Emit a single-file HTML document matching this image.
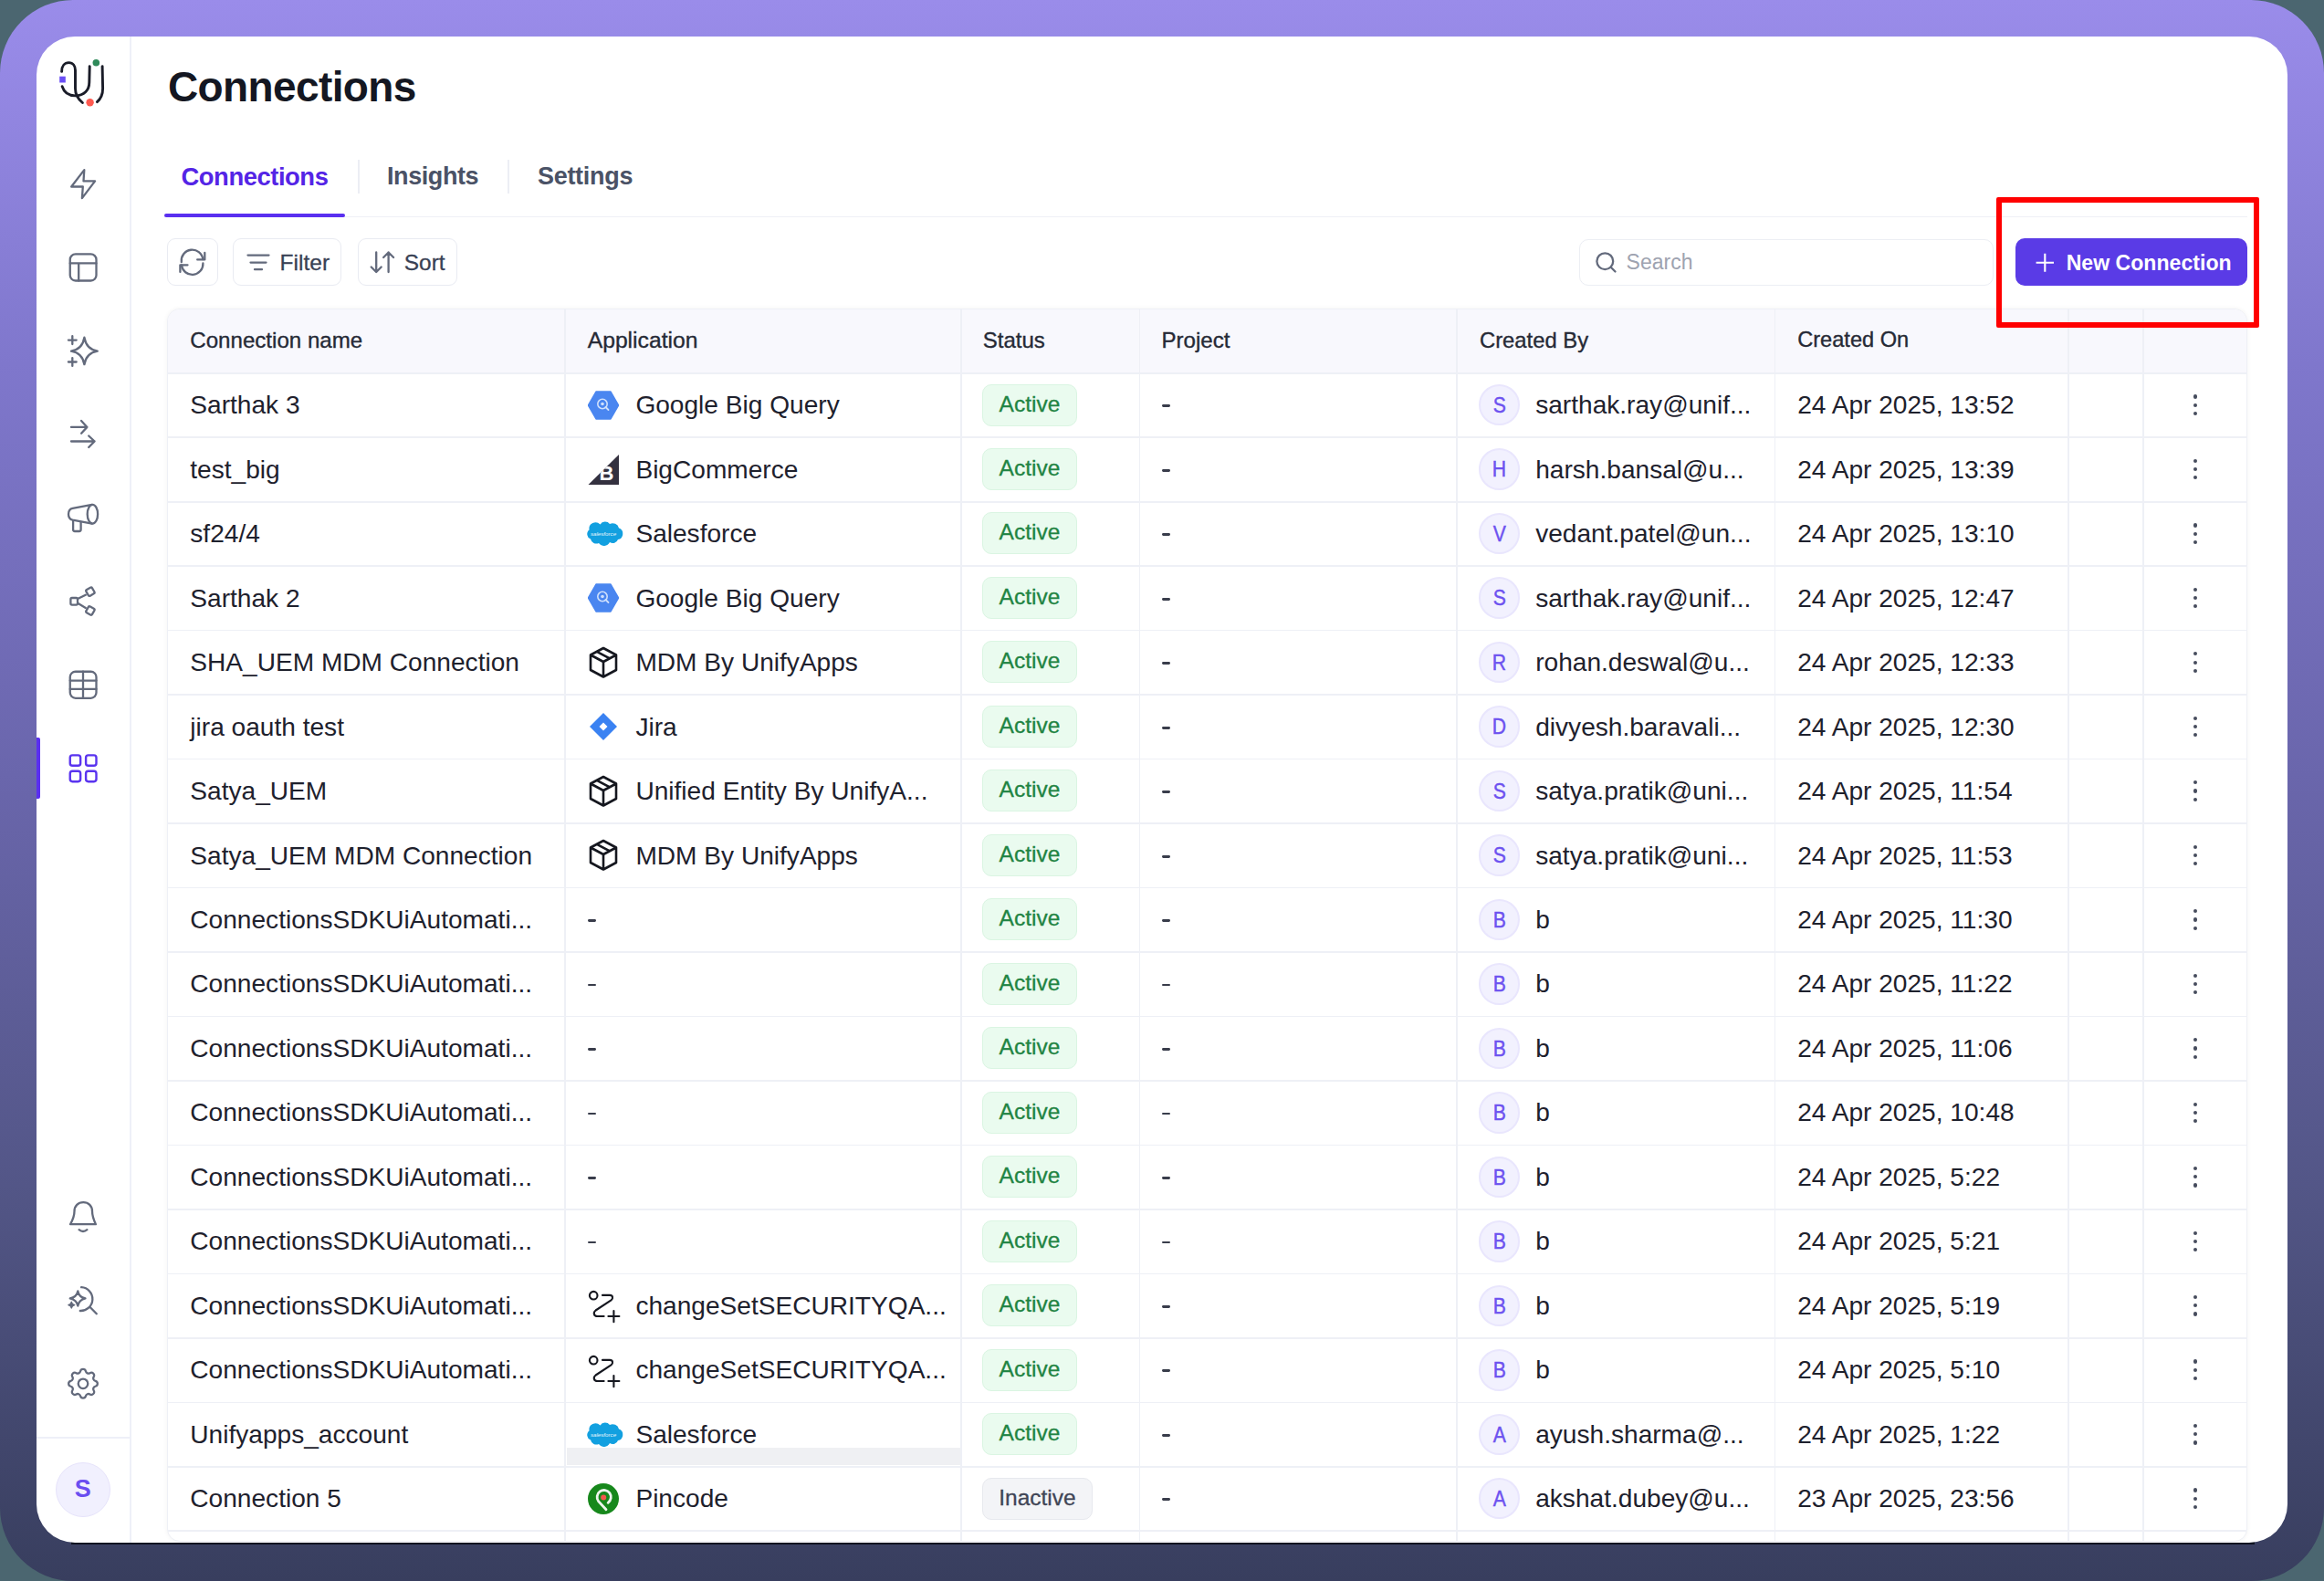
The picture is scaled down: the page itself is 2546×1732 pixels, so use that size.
<!DOCTYPE html><html><head><meta charset='utf-8'><style>
*{box-sizing:border-box;margin:0;padding:0}
html,body{width:2546px;height:1732px;overflow:hidden;background:#4b6670;font-family:"Liberation Sans",sans-serif}
.abs{position:absolute}
.frame{position:absolute;left:0;top:0;width:2546px;height:1732px;border-radius:80px;background:linear-gradient(180deg,#9a8cea 0%,#7f77cc 23%,#6a66ac 49%,#535687 75%,#383e5e 100%)}
.win{position:absolute;left:40px;top:40px;width:2466px;height:1650px;border-radius:42px;background:#ffffff;overflow:hidden}
.t{position:absolute;white-space:nowrap;line-height:1}
.btn{position:absolute;top:261px;height:52px;border:1.5px solid #e9ebf2;border-radius:9px;background:#fff}
.cell{position:absolute;white-space:nowrap;color:#1e212d;font-size:28.1px;line-height:1}
.hd{position:absolute;white-space:nowrap;color:#262a36;font-size:24px;line-height:1;-webkit-text-stroke:0.35px #262a36}
.badge{position:absolute;height:46px;border-radius:10px;font-size:24.5px;line-height:41px;text-align:center;-webkit-text-stroke:0.3px currentColor}
.av{position:absolute;width:45.5px;height:45.5px;border-radius:50%;background:#f2f1fe;border:2px solid #e9e6fd;color:#6d52f0;font-size:23.5px;-webkit-text-stroke:0.45px #6d52f0;line-height:42.5px;text-align:center}.av span{display:inline-block;transform:scaleX(0.9)}
.kb{position:absolute;width:4.2px;height:4.2px;border-radius:50%;background:#464c5d}
</style></head><body>
<div class="frame"></div>
<div class="abs" style="left:78px;top:1689px;width:2392px;height:3px;background:#111522"></div>
<div class="win"></div>
<div class="abs" style="left:142px;top:40px;width:1.5px;height:1650px;background:#eef0f8"></div>
<div class="abs" style="left:40px;top:1574px;width:102px;height:1.5px;background:#eef0f8"></div>
<svg class="abs" style="left:0;top:0" width="2546" height="1732" viewBox="0 0 2546 1732"><path d="M67.6 78.4 C67.6 72 71 68.6 75.4 68.6 C80 68.6 82.5 72.5 82.5 77 L82.5 97 C82.5 104 85.5 108.5 90.4 112.5" fill="none" stroke="#1a1c28" stroke-width="2.9" stroke-linecap="round"/><path d="M68.1 94.7 C70 101 75 104.9 82.5 104.9 C92 104.9 97.8 99 97.8 90 L98.2 72.6" fill="none" stroke="#1a1c28" stroke-width="2.9" stroke-linecap="round"/><path d="M112.1 72.6 L112.6 97 C112.6 103.5 110 108.5 106.4 111.6" fill="none" stroke="#1a1c28" stroke-width="2.9" stroke-linecap="round"/><circle cx="105.3" cy="68.8" r="3.8" fill="#2f8a5a"/><circle cx="98.6" cy="112.2" r="4.2" fill="#ff5a50"/><rect x="65.2" y="83.7" width="6.6" height="6.8" fill="#6a4ff5"/><path d="M92.3 186.1 L78.2 204.5 L90.8 204.5 L89.9 217.1 L104.1 198.4 L91.5 198.4 Z" fill="none" stroke="#636a7c" stroke-width="2.3" stroke-linecap="round" stroke-linejoin="round"/><rect x="76.75" y="278.4" width="28.75" height="29.1" rx="6" fill="none" stroke="#636a7c" stroke-width="2.3" stroke-linecap="round" stroke-linejoin="round"/><path d="M76.75 288.4 H105.5 M86.2 288.4 V307.5" fill="none" stroke="#636a7c" stroke-width="2.3" stroke-linecap="round" stroke-linejoin="round"/><path d="M92.4 369.75 Q94.5 382.5 106.8 384.6 Q94.5 386.7 92.4 399.2 Q90.3 386.7 78 384.6 Q90.3 382.5 92.4 369.75 Z" fill="none" stroke="#636a7c" stroke-width="2.3" stroke-linecap="round" stroke-linejoin="round"/><path d="M79.3 368.2 V377 M74.9 372.6 H83.7 M79.3 392.1 V400.9 M74.9 396.5 H83.7" fill="none" stroke="#636a7c" stroke-width="2.3" stroke-linecap="round" stroke-linejoin="round"/><path d="M78 467.9 H95.4 M89.1 460.9 L95.4 467.9 L89.1 474.7 M78 483.5 H103.6 M97.2 477.5 L103.6 483.5 L97.2 490" fill="none" stroke="#636a7c" stroke-width="2.3" stroke-linecap="round" stroke-linejoin="round"/><path d="M100.8 552.9 L79.6 556.9 C76.5 557.5 75 560 75 563.2 C75 566.5 76.5 569 79.6 569.7 L100.8 573.6" fill="none" stroke="#636a7c" stroke-width="2.3" stroke-linecap="round" stroke-linejoin="round"/><ellipse cx="101.4" cy="563.2" rx="5.7" ry="10.4" fill="none" stroke="#636a7c" stroke-width="2.3" stroke-linecap="round" stroke-linejoin="round"/><path d="M80.1 570.5 V580 Q80.1 582 82 582 H86.8 Q88.6 582 88.6 580 V572" fill="none" stroke="#636a7c" stroke-width="2.3" stroke-linecap="round" stroke-linejoin="round"/><rect x="77.4" y="655" width="7.6" height="7.6" rx="1.5" fill="none" stroke="#636a7c" stroke-width="2.3" stroke-linecap="round" stroke-linejoin="round"/><rect x="95.1" y="644.4" width="7.6" height="7.6" rx="1.5" transform="rotate(-30 98.9 648.2)" fill="none" stroke="#636a7c" stroke-width="2.3" stroke-linecap="round" stroke-linejoin="round"/><rect x="95.1" y="665.2" width="7.6" height="7.6" rx="1.5" transform="rotate(30 98.9 669)" fill="none" stroke="#636a7c" stroke-width="2.3" stroke-linecap="round" stroke-linejoin="round"/><path d="M85.6 655.8 L93.8 651.7 M85.6 661.1 L93.8 665.9" fill="none" stroke="#636a7c" stroke-width="2.3" stroke-linecap="round" stroke-linejoin="round"/><rect x="76.75" y="735.75" width="28.75" height="29.05" rx="6" fill="none" stroke="#636a7c" stroke-width="2.3" stroke-linecap="round" stroke-linejoin="round"/><path d="M91 735.75 V764.8 M76.75 745.6 H105.5 M76.75 754.9 H105.5" fill="none" stroke="#636a7c" stroke-width="2.3" stroke-linecap="round" stroke-linejoin="round"/><rect x="76.75" y="827.4" width="11.4" height="11.4" rx="2.6" fill="none" stroke="#5a34ef" stroke-width="2.4" stroke-linejoin="round"/><rect x="94.1" y="827.4" width="11.4" height="11.4" rx="2.6" fill="none" stroke="#5a34ef" stroke-width="2.4" stroke-linejoin="round"/><rect x="76.75" y="844.8" width="11.4" height="11.4" rx="2.6" fill="none" stroke="#5a34ef" stroke-width="2.4" stroke-linejoin="round"/><rect x="94.1" y="844.8" width="11.4" height="11.4" rx="2.6" fill="none" stroke="#5a34ef" stroke-width="2.4" stroke-linejoin="round"/><path d="M77 1341.2 C80 1336 81.5 1332 81.5 1327 C81.5 1321 85.5 1317.2 91.3 1317.2 C97 1317.2 101 1321 101 1327 C101 1332 102.5 1336 104.9 1341.2 Z M86.6 1347.2 Q91 1350.8 95.4 1347.2" fill="none" stroke="#636a7c" stroke-width="2.3" stroke-linecap="round" stroke-linejoin="round"/><path d="M89.1 1410.2 A12.9 12.9 0 1 1 87.8 1436 M98.9 1432.2 L105.8 1439.2" fill="none" stroke="#636a7c" stroke-width="2.3" stroke-linecap="round" stroke-linejoin="round"/><path d="M85.3 1414.5 Q86.5 1421 93.5 1422.4 Q86.5 1424 85.3 1430.6 Q84 1424 76.75 1422.4 Q84 1421 85.3 1414.5 Z" fill="none" stroke="#636a7c" stroke-width="2.3" stroke-linecap="round" stroke-linejoin="round"/><path d="M78.3 1426.2 Q78.9 1429.1 81.8 1429.7 Q78.9 1430.3 78.3 1433.2 Q77.7 1430.3 74.8 1429.7 Q77.7 1429.1 78.3 1426.2 Z" fill="#636a7c" stroke="#636a7c" stroke-width="1.2" stroke-linejoin="round"/><g transform="translate(91 1515.8) scale(1.76) translate(-12 -12)"><path d="M10.325 4.317c.426 -1.756 2.924 -1.756 3.35 0a1.724 1.724 0 0 0 2.573 1.066c1.543 -.94 3.31 .826 2.37 2.37a1.724 1.724 0 0 0 1.065 2.572c1.756 .426 1.756 2.924 0 3.35a1.724 1.724 0 0 0 -1.066 2.573c.94 1.543 -.826 3.31 -2.37 2.37a1.724 1.724 0 0 0 -2.572 1.065c-.426 1.756 -2.924 1.756 -3.35 0a1.724 1.724 0 0 0 -2.573 -1.066c-1.543 .94 -3.31 -.826 -2.37 -2.37a1.724 1.724 0 0 0 -1.065 -2.572c-1.756 -.426 -1.756 -2.924 0 -3.35a1.724 1.724 0 0 0 1.066 -2.573c-.94 -1.543 .826 -3.31 2.37 -2.37c1 .608 2.296 .07 2.572 -1.065z" fill="none" stroke="#636a7c" stroke-width="1.3" stroke-linejoin="round"/><circle cx="12" cy="12" r="3" fill="none" stroke="#636a7c" stroke-width="1.3"/></g></svg>
<div class="abs" style="left:40px;top:807.7px;width:3.6px;height:67.8px;background:#5a2ff0;border-radius:0 2px 2px 0"></div>
<div class="abs" style="left:60.8px;top:1602px;width:60px;height:60px;border-radius:50%;background:#f1f0fe;border:1.5px solid #e6e3fb;color:#6a4ef0;font-weight:bold;font-size:27px;line-height:57px;text-align:center">S</div>
<div class="t" style="left:184px;top:72.2px;font-size:46px;letter-spacing:-0.62px;font-weight:bold;color:#141722">Connections</div>
<div class="t" style="left:198.5px;top:180px;font-size:27.4px;letter-spacing:-0.45px;font-weight:bold;color:#5424e6">Connections</div>
<div class="t" style="left:424px;top:180.3px;font-size:27px;letter-spacing:-0.42px;font-weight:bold;color:#4a5266">Insights</div>
<div class="t" style="left:589px;top:180.3px;font-size:27px;letter-spacing:-0.3px;font-weight:bold;color:#4a5266">Settings</div>
<div class="abs" style="left:392px;top:175px;width:1.5px;height:37px;background:#eceef4"></div>
<div class="abs" style="left:556px;top:175px;width:1.5px;height:37px;background:#eceef4"></div>
<div class="abs" style="left:180px;top:236.6px;width:2282px;height:1.7px;background:#eef0f6"></div>
<div class="abs" style="left:180.4px;top:234px;width:197.6px;height:4px;background:#5a2ff0;border-radius:2px"></div>
<div class="btn" style="left:183px;width:56px"></div>
<div class="btn" style="left:255px;width:119px"></div>
<div class="btn" style="left:392px;width:108.5px"></div>
<div class="t" style="left:306.6px;top:276px;font-size:24.5px;color:#394154;-webkit-text-stroke:0.3px #394154">Filter</div>
<div class="t" style="left:442.8px;top:276px;font-size:24.4px;color:#394154;-webkit-text-stroke:0.3px #394154">Sort</div>
<div class="abs" style="left:1730px;top:261.5px;width:454px;height:51.5px;border:1.5px solid #eceef4;border-radius:10px;background:#fff"></div>
<div class="t" style="left:1781.6px;top:276px;font-size:23px;color:#9ea3b0">Search</div>
<div class="abs" style="left:2208px;top:261px;width:254px;height:52px;border-radius:10px;background:#5a3be6"></div>
<div class="t" style="left:2263.7px;top:277px;font-size:23.1px;font-weight:bold;color:#ffffff">New Connection</div>
<div class="abs" style="left:183px;top:337.5px;width:2278.5px;height:1351.5px;border:1.5px solid #eef0f6;border-radius:14px;overflow:hidden;background:#fff;box-shadow:0 0 5px rgba(16,24,40,0.05)">
<div class="abs" style="left:0;top:0;width:100%;height:70.3px;background:#f8f8fd"></div>
<div class="abs" style="left:0;top:69.50px;width:100%;height:1.6px;background:#eef0f6"></div>
<div class="abs" style="left:0;top:139.97px;width:100%;height:1.6px;background:#eef0f6"></div>
<div class="abs" style="left:0;top:210.44px;width:100%;height:1.6px;background:#eef0f6"></div>
<div class="abs" style="left:0;top:280.91px;width:100%;height:1.6px;background:#eef0f6"></div>
<div class="abs" style="left:0;top:351.38px;width:100%;height:1.6px;background:#eef0f6"></div>
<div class="abs" style="left:0;top:421.85px;width:100%;height:1.6px;background:#eef0f6"></div>
<div class="abs" style="left:0;top:492.32px;width:100%;height:1.6px;background:#eef0f6"></div>
<div class="abs" style="left:0;top:562.79px;width:100%;height:1.6px;background:#eef0f6"></div>
<div class="abs" style="left:0;top:633.26px;width:100%;height:1.6px;background:#eef0f6"></div>
<div class="abs" style="left:0;top:703.73px;width:100%;height:1.6px;background:#eef0f6"></div>
<div class="abs" style="left:0;top:774.20px;width:100%;height:1.6px;background:#eef0f6"></div>
<div class="abs" style="left:0;top:844.67px;width:100%;height:1.6px;background:#eef0f6"></div>
<div class="abs" style="left:0;top:915.14px;width:100%;height:1.6px;background:#eef0f6"></div>
<div class="abs" style="left:0;top:985.61px;width:100%;height:1.6px;background:#eef0f6"></div>
<div class="abs" style="left:0;top:1056.08px;width:100%;height:1.6px;background:#eef0f6"></div>
<div class="abs" style="left:0;top:1126.55px;width:100%;height:1.6px;background:#eef0f6"></div>
<div class="abs" style="left:0;top:1197.02px;width:100%;height:1.6px;background:#eef0f6"></div>
<div class="abs" style="left:0;top:1267.49px;width:100%;height:1.6px;background:#eef0f6"></div>
<div class="abs" style="left:0;top:1337.96px;width:100%;height:1.6px;background:#eef0f6"></div>
<div class="abs" style="left:434.20px;top:0;width:1.5px;height:100%;background:#eef0f6"></div>
<div class="abs" style="left:868.10px;top:0;width:1.5px;height:100%;background:#eef0f6"></div>
<div class="abs" style="left:1063.70px;top:0;width:1.5px;height:100%;background:#eef0f6"></div>
<div class="abs" style="left:1411.10px;top:0;width:1.5px;height:100%;background:#eef0f6"></div>
<div class="abs" style="left:1759.70px;top:0;width:1.5px;height:100%;background:#eef0f6"></div>
<div class="abs" style="left:2081.20px;top:0;width:1.5px;height:100%;background:#eef0f6"></div>
<div class="abs" style="left:2163.20px;top:0;width:1.5px;height:100%;background:#eef0f6"></div>
</div>
<div class="abs" style="left:621px;top:1585.5px;width:430.5px;height:19.5px;background:#eff0f3"></div>
<div class="hd" style="left:208.3px;top:361.0px;font-size:24.1px">Connection name</div>
<div class="hd" style="left:643.7px;top:361.0px;font-size:24.7px">Application</div>
<div class="hd" style="left:1076.8px;top:361.0px;font-size:24.0px">Status</div>
<div class="hd" style="left:1272.5px;top:361.0px;font-size:24.1px">Project</div>
<div class="hd" style="left:1621px;top:361.0px;font-size:23.8px">Created By</div>
<div class="hd" style="left:1969.2px;top:361.0px;font-size:23.6px">Created On</div>
<div class="cell" style="left:208.3px;top:430.24px">Sarthak 3</div>
<div class="abs" style="left:644.00px;top:427.74px;width:34.0px;height:32.0px;line-height:0"><svg width="34" height="32" viewBox="0 0 34 32"><path d="M9 1 H25 L33.5 16 L25 31 H9 L0.5 16 Z" fill="#4a86f0" stroke="#4a86f0" stroke-width="1.5" stroke-linejoin="round"/><circle cx="16" cy="14.5" r="5.2" fill="none" stroke="#cfe0fc" stroke-width="1.6"/><circle cx="16" cy="14.5" r="1.8" fill="#cfe0fc"/><path d="M19.5 18 L22.5 21" stroke="#cfe0fc" stroke-width="1.8" stroke-linecap="round"/></svg></div>
<div class="cell" style="left:696.4px;top:430.24px">Google Big Query</div>
<div class="badge" style="left:1076.3px;top:420.54px;width:103.3px;background:#eafbef;border:1.5px solid #daf5e2;color:#1f8443">Active</div>
<div class="abs" style="left:1273px;top:443.44px;width:9px;height:2.8px;border-radius:1.4px;background:#393d4b"></div>
<div class="av" style="left:1619.8px;top:420.99px"><span>S</span></div>
<div class="cell" style="left:1682.2px;top:430.24px">sarthak.ray@unif...</div>
<div class="cell" style="left:1969.2px;top:430.24px">24 Apr 2025, 13:52</div>
<div class="kb" style="left:2402.70px;top:432.44px"></div>
<div class="kb" style="left:2402.70px;top:441.63px"></div>
<div class="kb" style="left:2402.70px;top:450.83px"></div>
<div class="cell" style="left:208.3px;top:500.71px">test_big</div>
<div class="abs" style="left:644.00px;top:497.21px;width:34.0px;height:34.0px;line-height:0"><svg width="34" height="34" viewBox="0 0 34 34"><defs><clipPath id="bcc"><path d="M34 1 V34 H0.5 Z"/></clipPath></defs><path d="M34 1 V34 H0.5 Z" fill="#34313f"/><text x="12.6" y="29" clip-path="url(#bcc)" font-family="Liberation Sans" font-weight="bold" font-size="22" fill="#ffffff">B</text></svg></div>
<div class="cell" style="left:696.4px;top:500.71px">BigCommerce</div>
<div class="badge" style="left:1076.3px;top:491.01px;width:103.3px;background:#eafbef;border:1.5px solid #daf5e2;color:#1f8443">Active</div>
<div class="abs" style="left:1273px;top:513.91px;width:9px;height:2.8px;border-radius:1.4px;background:#393d4b"></div>
<div class="av" style="left:1619.8px;top:491.46px"><span>H</span></div>
<div class="cell" style="left:1682.2px;top:500.71px">harsh.bansal@u...</div>
<div class="cell" style="left:1969.2px;top:500.71px">24 Apr 2025, 13:39</div>
<div class="kb" style="left:2402.70px;top:502.91px"></div>
<div class="kb" style="left:2402.70px;top:512.11px"></div>
<div class="kb" style="left:2402.70px;top:521.31px"></div>
<div class="cell" style="left:208.3px;top:571.18px">sf24/4</div>
<div class="abs" style="left:642.00px;top:571.18px;width:38.0px;height:27.0px;line-height:0"><svg width="38" height="27" viewBox="0 0 38 27" style="overflow:visible"><path d="M15.5 3.5 a6.5 6.5 0 0 1 10.5 -0.5 a7 7 0 0 1 10 4.5 a6.5 6.5 0 0 1 -1 12.5 a6 6 0 0 1 -9 3 a7 7 0 0 1 -12 1 a6.5 6.5 0 0 1 -9 -4.5 a5.8 5.8 0 0 1 -1.5 -10 a7 7 0 0 1 12 -6 z" fill="#12a0e0"/><text x="19" y="15.5" font-family="Liberation Sans" font-size="6.2" fill="#e6f5fc" text-anchor="middle" font-style="italic">salesforce</text></svg></div>
<div class="cell" style="left:696.4px;top:571.18px">Salesforce</div>
<div class="badge" style="left:1076.3px;top:561.48px;width:103.3px;background:#eafbef;border:1.5px solid #daf5e2;color:#1f8443">Active</div>
<div class="abs" style="left:1273px;top:584.38px;width:9px;height:2.8px;border-radius:1.4px;background:#393d4b"></div>
<div class="av" style="left:1619.8px;top:561.93px"><span>V</span></div>
<div class="cell" style="left:1682.2px;top:571.18px">vedant.patel@un...</div>
<div class="cell" style="left:1969.2px;top:571.18px">24 Apr 2025, 13:10</div>
<div class="kb" style="left:2402.70px;top:573.38px"></div>
<div class="kb" style="left:2402.70px;top:582.58px"></div>
<div class="kb" style="left:2402.70px;top:591.78px"></div>
<div class="cell" style="left:208.3px;top:641.64px">Sarthak 2</div>
<div class="abs" style="left:644.00px;top:639.14px;width:34.0px;height:32.0px;line-height:0"><svg width="34" height="32" viewBox="0 0 34 32"><path d="M9 1 H25 L33.5 16 L25 31 H9 L0.5 16 Z" fill="#4a86f0" stroke="#4a86f0" stroke-width="1.5" stroke-linejoin="round"/><circle cx="16" cy="14.5" r="5.2" fill="none" stroke="#cfe0fc" stroke-width="1.6"/><circle cx="16" cy="14.5" r="1.8" fill="#cfe0fc"/><path d="M19.5 18 L22.5 21" stroke="#cfe0fc" stroke-width="1.8" stroke-linecap="round"/></svg></div>
<div class="cell" style="left:696.4px;top:641.64px">Google Big Query</div>
<div class="badge" style="left:1076.3px;top:631.94px;width:103.3px;background:#eafbef;border:1.5px solid #daf5e2;color:#1f8443">Active</div>
<div class="abs" style="left:1273px;top:654.85px;width:9px;height:2.8px;border-radius:1.4px;background:#393d4b"></div>
<div class="av" style="left:1619.8px;top:632.39px"><span>S</span></div>
<div class="cell" style="left:1682.2px;top:641.64px">sarthak.ray@unif...</div>
<div class="cell" style="left:1969.2px;top:641.64px">24 Apr 2025, 12:47</div>
<div class="kb" style="left:2402.70px;top:643.84px"></div>
<div class="kb" style="left:2402.70px;top:653.04px"></div>
<div class="kb" style="left:2402.70px;top:662.25px"></div>
<div class="cell" style="left:208.3px;top:712.12px">SHA_UEM MDM Connection</div>
<div class="abs" style="left:644.00px;top:707.62px;width:34.0px;height:36.0px;line-height:0"><svg width="34" height="36" viewBox="0 0 34 36"><path d="M17 2 L31 9.5 V26 L17 33.5 L3 26 V9.5 Z M3 9.5 L17 17 L31 9.5 M17 17 V33.5 M9.8 5.8 L24 13.4" fill="none" stroke="#15171f" stroke-width="2.6" stroke-linejoin="round"/></svg></div>
<div class="cell" style="left:696.4px;top:712.12px">MDM By UnifyApps</div>
<div class="badge" style="left:1076.3px;top:702.41px;width:103.3px;background:#eafbef;border:1.5px solid #daf5e2;color:#1f8443">Active</div>
<div class="abs" style="left:1273px;top:725.32px;width:9px;height:2.8px;border-radius:1.4px;background:#393d4b"></div>
<div class="av" style="left:1619.8px;top:702.87px"><span>R</span></div>
<div class="cell" style="left:1682.2px;top:712.12px">rohan.deswal@u...</div>
<div class="cell" style="left:1969.2px;top:712.12px">24 Apr 2025, 12:33</div>
<div class="kb" style="left:2402.70px;top:714.31px"></div>
<div class="kb" style="left:2402.70px;top:723.51px"></div>
<div class="kb" style="left:2402.70px;top:732.72px"></div>
<div class="cell" style="left:208.3px;top:782.59px">jira oauth test</div>
<div class="abs" style="left:644.00px;top:779.09px;width:34.0px;height:34.0px;line-height:0"><svg width="34" height="34" viewBox="0 0 34 34"><path d="M17 2 L32 17 L17 32 L2 17 Z" fill="#3a82f2"/><path d="M17 12.5 L21.5 17 L17 21.5 L12.5 17 Z" fill="#ffffff"/></svg></div>
<div class="cell" style="left:696.4px;top:782.59px">Jira</div>
<div class="badge" style="left:1076.3px;top:772.88px;width:103.3px;background:#eafbef;border:1.5px solid #daf5e2;color:#1f8443">Active</div>
<div class="abs" style="left:1273px;top:795.79px;width:9px;height:2.8px;border-radius:1.4px;background:#393d4b"></div>
<div class="av" style="left:1619.8px;top:773.34px"><span>D</span></div>
<div class="cell" style="left:1682.2px;top:782.59px">divyesh.baravali...</div>
<div class="cell" style="left:1969.2px;top:782.59px">24 Apr 2025, 12:30</div>
<div class="kb" style="left:2402.70px;top:784.78px"></div>
<div class="kb" style="left:2402.70px;top:793.99px"></div>
<div class="kb" style="left:2402.70px;top:803.19px"></div>
<div class="cell" style="left:208.3px;top:853.05px">Satya_UEM</div>
<div class="abs" style="left:644.00px;top:848.55px;width:34.0px;height:36.0px;line-height:0"><svg width="34" height="36" viewBox="0 0 34 36"><path d="M17 2 L31 9.5 V26 L17 33.5 L3 26 V9.5 Z M3 9.5 L17 17 L31 9.5 M17 17 V33.5 M9.8 5.8 L24 13.4" fill="none" stroke="#15171f" stroke-width="2.6" stroke-linejoin="round"/></svg></div>
<div class="cell" style="left:696.4px;top:853.05px">Unified Entity By UnifyA...</div>
<div class="badge" style="left:1076.3px;top:843.35px;width:103.3px;background:#eafbef;border:1.5px solid #daf5e2;color:#1f8443">Active</div>
<div class="abs" style="left:1273px;top:866.25px;width:9px;height:2.8px;border-radius:1.4px;background:#393d4b"></div>
<div class="av" style="left:1619.8px;top:843.80px"><span>S</span></div>
<div class="cell" style="left:1682.2px;top:853.05px">satya.pratik@uni...</div>
<div class="cell" style="left:1969.2px;top:853.05px">24 Apr 2025, 11:54</div>
<div class="kb" style="left:2402.70px;top:855.25px"></div>
<div class="kb" style="left:2402.70px;top:864.45px"></div>
<div class="kb" style="left:2402.70px;top:873.65px"></div>
<div class="cell" style="left:208.3px;top:923.52px">Satya_UEM MDM Connection</div>
<div class="abs" style="left:644.00px;top:919.02px;width:34.0px;height:36.0px;line-height:0"><svg width="34" height="36" viewBox="0 0 34 36"><path d="M17 2 L31 9.5 V26 L17 33.5 L3 26 V9.5 Z M3 9.5 L17 17 L31 9.5 M17 17 V33.5 M9.8 5.8 L24 13.4" fill="none" stroke="#15171f" stroke-width="2.6" stroke-linejoin="round"/></svg></div>
<div class="cell" style="left:696.4px;top:923.52px">MDM By UnifyApps</div>
<div class="badge" style="left:1076.3px;top:913.82px;width:103.3px;background:#eafbef;border:1.5px solid #daf5e2;color:#1f8443">Active</div>
<div class="abs" style="left:1273px;top:936.73px;width:9px;height:2.8px;border-radius:1.4px;background:#393d4b"></div>
<div class="av" style="left:1619.8px;top:914.27px"><span>S</span></div>
<div class="cell" style="left:1682.2px;top:923.52px">satya.pratik@uni...</div>
<div class="cell" style="left:1969.2px;top:923.52px">24 Apr 2025, 11:53</div>
<div class="kb" style="left:2402.70px;top:925.72px"></div>
<div class="kb" style="left:2402.70px;top:934.92px"></div>
<div class="kb" style="left:2402.70px;top:944.12px"></div>
<div class="cell" style="left:208.3px;top:994.00px">ConnectionsSDKUiAutomati...</div>
<div class="abs" style="left:643.7px;top:1007.20px;width:9px;height:2.8px;border-radius:1.4px;background:#393d4b"></div>
<div class="badge" style="left:1076.3px;top:984.29px;width:103.3px;background:#eafbef;border:1.5px solid #daf5e2;color:#1f8443">Active</div>
<div class="abs" style="left:1273px;top:1007.20px;width:9px;height:2.8px;border-radius:1.4px;background:#393d4b"></div>
<div class="av" style="left:1619.8px;top:984.75px"><span>B</span></div>
<div class="cell" style="left:1682.2px;top:994.00px">b</div>
<div class="cell" style="left:1969.2px;top:994.00px">24 Apr 2025, 11:30</div>
<div class="kb" style="left:2402.70px;top:996.19px"></div>
<div class="kb" style="left:2402.70px;top:1005.39px"></div>
<div class="kb" style="left:2402.70px;top:1014.60px"></div>
<div class="cell" style="left:208.3px;top:1064.46px">ConnectionsSDKUiAutomati...</div>
<div class="abs" style="left:643.7px;top:1077.66px;width:9px;height:2.8px;border-radius:1.4px;background:#393d4b"></div>
<div class="badge" style="left:1076.3px;top:1054.76px;width:103.3px;background:#eafbef;border:1.5px solid #daf5e2;color:#1f8443">Active</div>
<div class="abs" style="left:1273px;top:1077.66px;width:9px;height:2.8px;border-radius:1.4px;background:#393d4b"></div>
<div class="av" style="left:1619.8px;top:1055.21px"><span>B</span></div>
<div class="cell" style="left:1682.2px;top:1064.46px">b</div>
<div class="cell" style="left:1969.2px;top:1064.46px">24 Apr 2025, 11:22</div>
<div class="kb" style="left:2402.70px;top:1066.66px"></div>
<div class="kb" style="left:2402.70px;top:1075.87px"></div>
<div class="kb" style="left:2402.70px;top:1085.07px"></div>
<div class="cell" style="left:208.3px;top:1134.93px">ConnectionsSDKUiAutomati...</div>
<div class="abs" style="left:643.7px;top:1148.13px;width:9px;height:2.8px;border-radius:1.4px;background:#393d4b"></div>
<div class="badge" style="left:1076.3px;top:1125.23px;width:103.3px;background:#eafbef;border:1.5px solid #daf5e2;color:#1f8443">Active</div>
<div class="abs" style="left:1273px;top:1148.13px;width:9px;height:2.8px;border-radius:1.4px;background:#393d4b"></div>
<div class="av" style="left:1619.8px;top:1125.68px"><span>B</span></div>
<div class="cell" style="left:1682.2px;top:1134.93px">b</div>
<div class="cell" style="left:1969.2px;top:1134.93px">24 Apr 2025, 11:06</div>
<div class="kb" style="left:2402.70px;top:1137.13px"></div>
<div class="kb" style="left:2402.70px;top:1146.34px"></div>
<div class="kb" style="left:2402.70px;top:1155.54px"></div>
<div class="cell" style="left:208.3px;top:1205.40px">ConnectionsSDKUiAutomati...</div>
<div class="abs" style="left:643.7px;top:1218.61px;width:9px;height:2.8px;border-radius:1.4px;background:#393d4b"></div>
<div class="badge" style="left:1076.3px;top:1195.70px;width:103.3px;background:#eafbef;border:1.5px solid #daf5e2;color:#1f8443">Active</div>
<div class="abs" style="left:1273px;top:1218.61px;width:9px;height:2.8px;border-radius:1.4px;background:#393d4b"></div>
<div class="av" style="left:1619.8px;top:1196.15px"><span>B</span></div>
<div class="cell" style="left:1682.2px;top:1205.40px">b</div>
<div class="cell" style="left:1969.2px;top:1205.40px">24 Apr 2025, 10:48</div>
<div class="kb" style="left:2402.70px;top:1207.61px"></div>
<div class="kb" style="left:2402.70px;top:1216.81px"></div>
<div class="kb" style="left:2402.70px;top:1226.01px"></div>
<div class="cell" style="left:208.3px;top:1275.87px">ConnectionsSDKUiAutomati...</div>
<div class="abs" style="left:643.7px;top:1289.07px;width:9px;height:2.8px;border-radius:1.4px;background:#393d4b"></div>
<div class="badge" style="left:1076.3px;top:1266.17px;width:103.3px;background:#eafbef;border:1.5px solid #daf5e2;color:#1f8443">Active</div>
<div class="abs" style="left:1273px;top:1289.07px;width:9px;height:2.8px;border-radius:1.4px;background:#393d4b"></div>
<div class="av" style="left:1619.8px;top:1266.62px"><span>B</span></div>
<div class="cell" style="left:1682.2px;top:1275.87px">b</div>
<div class="cell" style="left:1969.2px;top:1275.87px">24 Apr 2025, 5:22</div>
<div class="kb" style="left:2402.70px;top:1278.07px"></div>
<div class="kb" style="left:2402.70px;top:1287.27px"></div>
<div class="kb" style="left:2402.70px;top:1296.47px"></div>
<div class="cell" style="left:208.3px;top:1346.35px">ConnectionsSDKUiAutomati...</div>
<div class="abs" style="left:643.7px;top:1359.55px;width:9px;height:2.8px;border-radius:1.4px;background:#393d4b"></div>
<div class="badge" style="left:1076.3px;top:1336.64px;width:103.3px;background:#eafbef;border:1.5px solid #daf5e2;color:#1f8443">Active</div>
<div class="abs" style="left:1273px;top:1359.55px;width:9px;height:2.8px;border-radius:1.4px;background:#393d4b"></div>
<div class="av" style="left:1619.8px;top:1337.10px"><span>B</span></div>
<div class="cell" style="left:1682.2px;top:1346.35px">b</div>
<div class="cell" style="left:1969.2px;top:1346.35px">24 Apr 2025, 5:21</div>
<div class="kb" style="left:2402.70px;top:1348.55px"></div>
<div class="kb" style="left:2402.70px;top:1357.75px"></div>
<div class="kb" style="left:2402.70px;top:1366.95px"></div>
<div class="cell" style="left:208.3px;top:1416.81px">ConnectionsSDKUiAutomati...</div>
<div class="abs" style="left:643.00px;top:1412.31px;width:36.0px;height:36.0px;line-height:0"><svg width="36" height="36" viewBox="0 0 36 36" style="overflow:visible"><circle cx="7.2" cy="7.2" r="4.3" fill="none" stroke="#15171f" stroke-width="2.1"/><path d="M17 6.9 H25 C28.5 6.9 29 10.5 26.5 12.3 L9.6 23.5 C6.5 25.8 7.5 30 11.5 30 H18.6" fill="none" stroke="#15171f" stroke-width="2.1" stroke-linecap="round" stroke-linejoin="round"/><path d="M29.4 24 V36.3 M23.4 30 H35.4" stroke="#15171f" stroke-width="2.1" stroke-linecap="round"/></svg></div>
<div class="cell" style="left:696.4px;top:1416.81px">changeSetSECURITYQA...</div>
<div class="badge" style="left:1076.3px;top:1407.11px;width:103.3px;background:#eafbef;border:1.5px solid #daf5e2;color:#1f8443">Active</div>
<div class="abs" style="left:1273px;top:1430.01px;width:9px;height:2.8px;border-radius:1.4px;background:#393d4b"></div>
<div class="av" style="left:1619.8px;top:1407.56px"><span>B</span></div>
<div class="cell" style="left:1682.2px;top:1416.81px">b</div>
<div class="cell" style="left:1969.2px;top:1416.81px">24 Apr 2025, 5:19</div>
<div class="kb" style="left:2402.70px;top:1419.01px"></div>
<div class="kb" style="left:2402.70px;top:1428.21px"></div>
<div class="kb" style="left:2402.70px;top:1437.41px"></div>
<div class="cell" style="left:208.3px;top:1487.28px">ConnectionsSDKUiAutomati...</div>
<div class="abs" style="left:643.00px;top:1482.78px;width:36.0px;height:36.0px;line-height:0"><svg width="36" height="36" viewBox="0 0 36 36" style="overflow:visible"><circle cx="7.2" cy="7.2" r="4.3" fill="none" stroke="#15171f" stroke-width="2.1"/><path d="M17 6.9 H25 C28.5 6.9 29 10.5 26.5 12.3 L9.6 23.5 C6.5 25.8 7.5 30 11.5 30 H18.6" fill="none" stroke="#15171f" stroke-width="2.1" stroke-linecap="round" stroke-linejoin="round"/><path d="M29.4 24 V36.3 M23.4 30 H35.4" stroke="#15171f" stroke-width="2.1" stroke-linecap="round"/></svg></div>
<div class="cell" style="left:696.4px;top:1487.28px">changeSetSECURITYQA...</div>
<div class="badge" style="left:1076.3px;top:1477.58px;width:103.3px;background:#eafbef;border:1.5px solid #daf5e2;color:#1f8443">Active</div>
<div class="abs" style="left:1273px;top:1500.48px;width:9px;height:2.8px;border-radius:1.4px;background:#393d4b"></div>
<div class="av" style="left:1619.8px;top:1478.03px"><span>B</span></div>
<div class="cell" style="left:1682.2px;top:1487.28px">b</div>
<div class="cell" style="left:1969.2px;top:1487.28px">24 Apr 2025, 5:10</div>
<div class="kb" style="left:2402.70px;top:1489.48px"></div>
<div class="kb" style="left:2402.70px;top:1498.68px"></div>
<div class="kb" style="left:2402.70px;top:1507.88px"></div>
<div class="cell" style="left:208.3px;top:1557.75px">Unifyapps_account</div>
<div class="abs" style="left:642.00px;top:1557.75px;width:38.0px;height:27.0px;line-height:0"><svg width="38" height="27" viewBox="0 0 38 27" style="overflow:visible"><path d="M15.5 3.5 a6.5 6.5 0 0 1 10.5 -0.5 a7 7 0 0 1 10 4.5 a6.5 6.5 0 0 1 -1 12.5 a6 6 0 0 1 -9 3 a7 7 0 0 1 -12 1 a6.5 6.5 0 0 1 -9 -4.5 a5.8 5.8 0 0 1 -1.5 -10 a7 7 0 0 1 12 -6 z" fill="#12a0e0"/><text x="19" y="15.5" font-family="Liberation Sans" font-size="6.2" fill="#e6f5fc" text-anchor="middle" font-style="italic">salesforce</text></svg></div>
<div class="cell" style="left:696.4px;top:1557.75px">Salesforce</div>
<div class="badge" style="left:1076.3px;top:1548.05px;width:103.3px;background:#eafbef;border:1.5px solid #daf5e2;color:#1f8443">Active</div>
<div class="abs" style="left:1273px;top:1570.95px;width:9px;height:2.8px;border-radius:1.4px;background:#393d4b"></div>
<div class="av" style="left:1619.8px;top:1548.50px"><span>A</span></div>
<div class="cell" style="left:1682.2px;top:1557.75px">ayush.sharma@...</div>
<div class="cell" style="left:1969.2px;top:1557.75px">24 Apr 2025, 1:22</div>
<div class="kb" style="left:2402.70px;top:1559.95px"></div>
<div class="kb" style="left:2402.70px;top:1569.15px"></div>
<div class="kb" style="left:2402.70px;top:1578.36px"></div>
<div class="cell" style="left:208.3px;top:1628.22px">Connection 5</div>
<div class="abs" style="left:644.00px;top:1624.72px;width:34.0px;height:34.0px;line-height:0"><svg width="34" height="34" viewBox="0 0 34 34"><circle cx="17" cy="17" r="17" fill="#17881c"/><path d="M20 28.8 L11.6 19.6 A7.6 7.6 0 1 1 22.1 21.3" fill="none" stroke="#eef6ee" stroke-width="2.8" stroke-linecap="round"/><circle cx="17.2" cy="15.4" r="3" fill="#f5574c"/></svg></div>
<div class="cell" style="left:696.4px;top:1628.22px">Pincode</div>
<div class="badge" style="left:1076.3px;top:1618.52px;width:120.3px;background:#f3f4f7;border:1.5px solid #e7e9ee;color:#404556">Inactive</div>
<div class="abs" style="left:1273px;top:1641.42px;width:9px;height:2.8px;border-radius:1.4px;background:#393d4b"></div>
<div class="av" style="left:1619.8px;top:1618.97px"><span>A</span></div>
<div class="cell" style="left:1682.2px;top:1628.22px">akshat.dubey@u...</div>
<div class="cell" style="left:1969.2px;top:1628.22px">23 Apr 2025, 23:56</div>
<div class="kb" style="left:2402.70px;top:1630.42px"></div>
<div class="kb" style="left:2402.70px;top:1639.62px"></div>
<div class="kb" style="left:2402.70px;top:1648.83px"></div>
<svg class="abs" style="left:0;top:0" width="2546" height="1732" viewBox="0 0 2546 1732"><path d="M198.8 287 A11.8 11.8 0 0 1 222.3 284 M222.4 288.5 A11.8 11.8 0 0 1 198.9 290.5" fill="none" stroke="#636a7c" stroke-width="2.3" stroke-linecap="round" stroke-linejoin="round" stroke-width="1.9"/><path d="M224.3 276.9 V284.4 H216.2 M205.5 290.3 H197.4 V297.9" fill="none" stroke="#636a7c" stroke-width="2.3" stroke-linecap="round" stroke-linejoin="round" stroke-width="1.9"/><path d="M271.5 279.6 H294.5 M274.5 287.6 H291.5 M279 295.2 H287" fill="none" stroke="#636a7c" stroke-width="2.3" stroke-linecap="round" stroke-linejoin="round" stroke-width="2.1"/><path d="M412.2 276.5 V298 M406.7 292.5 L412.2 298 L417.7 292.5 M425.6 298 V276.5 M420.1 282 L425.6 276.5 L431.1 282" fill="none" stroke="#636a7c" stroke-width="2.3" stroke-linecap="round" stroke-linejoin="round" stroke-width="2.1"/><circle cx="1758.3" cy="286.2" r="8.9" fill="none" stroke="#636a7c" stroke-width="2.3" stroke-linecap="round" stroke-linejoin="round" stroke-width="2.1"/><path d="M1765 293 L1769.5 297.5" fill="none" stroke="#636a7c" stroke-width="2.3" stroke-linecap="round" stroke-linejoin="round" stroke-width="2.1"/><path d="M2240.3 277.8 V297.7 M2230.6 287.7 H2250" stroke="#ffffff" stroke-width="2.1"/></svg>
<div class="abs" style="left:2187px;top:216.3px;width:288.3px;height:142.6px;border:6px solid #ff0000;border-radius:2px"></div>
</body></html>
